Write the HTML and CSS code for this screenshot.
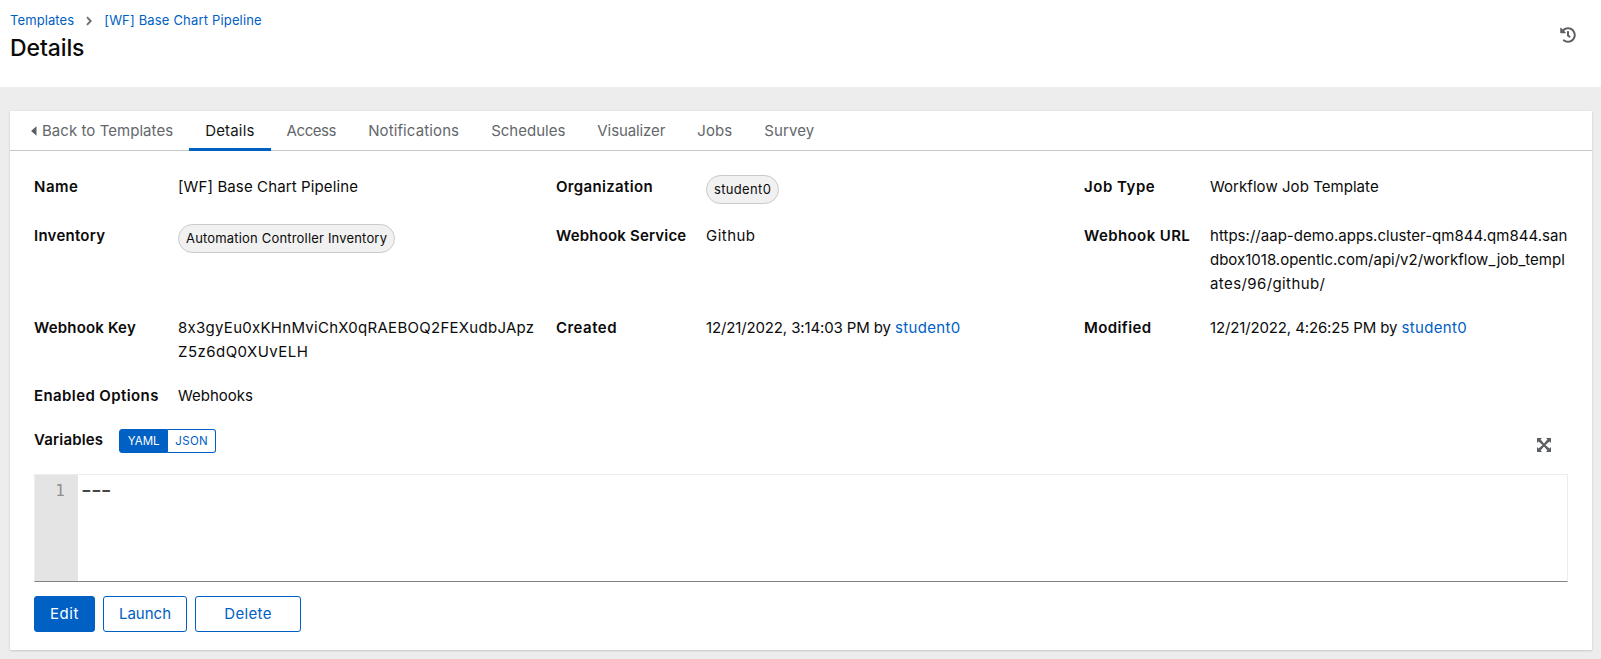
FILE: index.html
```html
<!DOCTYPE html>
<html lang="en">
<head>
<meta charset="utf-8">
<title>Details</title>
<link rel="stylesheet" href="styles.css">
</head>
<body>
<header class="page-header">
  <div>
    <nav class="breadcrumb">
      <a class="ls-10" href="#">Templates</a>
      <svg class="crumb-sep" viewBox="0 0 6 10"><path d="M1 1.200L4.700 5 1 8.800"/></svg>
      <a class="ls-15" href="#">[WF] Base Chart Pipeline</a>
    </nav>
    <h1>Details</h1>
  </div>
  <svg class="history" viewBox="0 0 512 512"><path d="M504 255.531c.253 136.640-111.180 248.372-247.820 248.468-59.015.042-113.223-20.530-155.822-54.911-11.077-8.940-11.905-25.541-1.839-35.607l11.267-11.267c8.609-8.609 22.353-9.551 31.891-1.984C173.062 425.135 212.781 440 256 440c101.705 0 184-82.311 184-184 0-101.705-82.311-184-184-184-48.814 0-93.149 18.969-126.068 49.932l50.754 50.754c10.080 10.080 2.941 27.314-11.313 27.314H24c-8.837 0-16-7.163-16-16V38.627c0-14.254 17.234-21.393 27.314-11.314l49.372 49.372C129.209 34.136 189.552 8 256 8c136.810 0 247.747 110.780 248 247.531zm-180.912 78.784l9.823-12.630c8.138-10.463 6.253-25.542-4.210-33.679L288 256.349V152c0-13.255-10.745-24-24-24h-16c-13.255 0-24 10.745-24 24v135.651l65.409 50.874c10.463 8.137 25.541 6.253 33.679-4.210z"/></svg>
</header>
<main class="section">
  <article class="card">
    <nav class="tabs">
      <a class="tab back ls-05" href="#"><svg viewBox="0 0 6 10"><path d="M5.500 0.200V9.800L0.600 5.600Q0 5 .6 4.400Z"/></svg>Back to Templates</a>
      <a class="tab active ls-20" href="#">Details</a>
      <a class="tab ls-n40" href="#">Access</a>
      <a class="tab ls-12" href="#">Notifications</a>
      <a class="tab" href="#">Schedules</a>
      <a class="tab ls-n10" href="#">Visualizer</a>
      <a class="tab ls-10" href="#">Jobs</a>
      <a class="tab ls-10" href="#">Survey</a>
    </nav>
    <div class="body">
      <dl class="details">
        <dt class="ls-50">Name</dt><dd class="ls-12">[WF] Base Chart Pipeline</dd>
        <dt class="ls-35">Organization</dt><dd><span class="chip ls-35">student0</span></dd>
        <dt class="ls-50">Job Type</dt><dd class="ls-05">Workflow Job Template</dd>
        <dt class="ls-25">Inventory</dt><dd><span class="chip ls-20">Automation Controller Inventory</span></dd>
        <dt class="ls-20">Webhook Service</dt><dd class="ls-45">Github</dd>
        <dt class="ls-40">Webhook URL</dt><dd><span class="ls-02">https://aap-demo.apps.cluster-qm844.qm844.san</span><br><span>dbox1018.opentlc.com/api/v2/workflow_job_templ</span><br><span class="ls-40">ates/96/github/</span></dd>
        <dt class="ls-20">Webhook Key</dt><dd><span class="ls-30">8x3gyEu0xKHnMviChX0qRAEBOQ2FEXudbJApz</span><br><span class="ls-45">Z5z6dQ0XUvELH</span></dd>
        <dt class="ls-45">Created</dt><dd><span class="ls-n13">12/21/2022, 3:14:03 PM by</span> <a class="ls-35" href="#">student0</a></dd>
        <dt class="ls-40">Modified</dt><dd><span class="ls-n13">12/21/2022, 4:26:25 PM by</span> <a class="ls-35" href="#">student0</a></dd>
        <dt class="ls-40">Enabled Options</dt><dd>Webhooks</dd>
      </dl>
      <div class="variables">
        <strong class="ls-15">Variables</strong>
        <div class="toggle"><button class="on">YAML</button><button class="ls-35">JSON</button></div>
        <svg class="expand" viewBox="0 0 14 14"><path d="M0 0H5L3.600 1.600 7 5.600 10.400 1.600 9 0H14V5L12.400 3.600 8.400 7 12.400 10.400 14 9V14H9L10.400 12.400 7 8.400 3.600 12.400 5 14H0V9L1.600 10.400 5.600 7 1.600 3.600 0 5Z"/></svg>
      </div>
      <div class="editor"><div class="gutter">1</div><div class="code">---</div></div>
      <div class="actions">
        <button class="btn edit primary ls-50">Edit</button>
        <button class="btn launch">Launch</button>
        <button class="btn delete ls-35">Delete</button>
      </div>
    </div>
  </article>
</main>
</body>
</html>
```
FILE: styles.css
```css
body {
  margin: 0;
  font: 15px/24px Inter, sans-serif;
  font-feature-settings: "calt" 0;
  color: #0b0b0b;
  background: #ededed;
}
a { color: #0060c4; text-decoration: none; }

/* tracking */
.ls-n40 { letter-spacing: -.42px; }
.ls-n13 { letter-spacing: -.135px; }
.ls-n10 { letter-spacing: -.1px; }
.ls-02 { letter-spacing: .025px; }
.ls-05 { letter-spacing: .05px; }
.ls-10 { letter-spacing: .1px; }
.ls-12 { letter-spacing: .12px; }
.ls-15 { letter-spacing: .17px; }
.ls-20 { letter-spacing: .18px; }
.ls-25 { letter-spacing: .26px; }
.ls-30 { letter-spacing: .28px; }
.ls-35 { letter-spacing: .34px; }
.ls-40 { letter-spacing: .4px; }
.ls-45 { letter-spacing: .47px; }
.ls-50 { letter-spacing: .53px; }

.page-header {
  display: flex;
  justify-content: space-between;
  box-sizing: border-box;
  height: 87px;
  padding: 10px 25px 0 10px;
  background: #fff;
}
.breadcrumb { display: flex; align-items: center; font-size: 13px; line-height: 21px; }
.crumb-sep { width: 6px; height: 10px; margin: 0 12px; fill: none; stroke: #6a6e73; stroke-width: 1.900; }
h1 { margin: 2px 0 0; font-size: 23px; font-weight: 500; line-height: 31px; letter-spacing: -.1px; }
.history { width: 16px; height: 16px; margin-top: 17px; fill: #5b5f64; }

.section { padding: 24px 9px 9px 10px; background: #ededed; }
.card { height: 539px; background: #fff; box-shadow: 0 1px 2px rgba(3, 3, 3, .14), 0 0 2px rgba(3, 3, 3, .07); }

.tabs {
  display: flex;
  box-sizing: border-box;
  height: 40px;
  padding-left: 5px;
  border-bottom: 1px solid #c7c7c7;
}
.tab { box-sizing: border-box; height: 40px; padding: 8px 16px; color: #63676b; }
.tab.active { color: #151515; border-bottom: 3px solid #0060c4; }
.back svg { width: 6px; height: 10px; margin-right: 5px; fill: #5b5f64; }

.body { padding: 24px; }
.details {
  display: grid;
  grid-template-columns: 124px 1fr 130px 1fr 106px 1fr;
  gap: 20px;
  margin: 0;
  white-space: nowrap;
}
dt, strong { font-weight: 600; }
dd { min-width: 0; margin: 0; }
.chip {
  display: block;
  box-sizing: border-box;
  width: fit-content;
  height: 29px;
  padding: 0 7px;
  border: 1px solid #c9c9c9;
  border-radius: 15px;
  background: #f1f1f1;
  font-size: 13px;
  line-height: 27px;
}

.variables { display: flex; align-items: flex-start; height: 46px; margin-top: 20px; }
.toggle { display: flex; margin-left: 16px; margin-top: 1px; }
.toggle button {
  box-sizing: border-box;
  width: 49px;
  height: 24px;
  padding: 0;
  border: 1px solid #0060c4;
  border-radius: 0 3px 3px 0;
  background: #fff;
  color: #0060c4;
  font: 11.5px/22px Inter, sans-serif;
}
.toggle .on { border-radius: 3px 0 0 3px; background: #0060c4; color: #fff; }
.toggle button + button { width: 48px; border-left: 0; }
.expand { width: 14px; height: 14px; margin: 10px 17px 0 auto; fill: #5b5f64; }

.editor {
  display: flex;
  box-sizing: border-box;
  height: 108px;
  border: 1px solid #ededed;
  border-bottom-color: #7f8286;
}
.gutter {
  box-sizing: border-box;
  width: 43px;
  padding: 4px 13px 0 0;
  background: #e4e4e4;
  color: #8f8f8f;
  font: 16px/24px "DejaVu Sans Mono", monospace;
  text-align: right;
}
.code { padding: 3px 0 0 3px; color: #444; font-size: 23.5px; letter-spacing: -.9px; }

.actions { display: flex; gap: 8px; margin-top: 14px; }
.btn {
  box-sizing: border-box;
  height: 36px;
  padding: 0;
  border: 1px solid #0060c4;
  border-radius: 3px;
  background: #fff;
  color: #0060c4;
  font: 15px/24px Inter, sans-serif;
}
.primary { background: #0060c4; color: #fff; }
.edit { width: 61px; }
.launch { width: 84px; }
.delete { width: 106px; }
```
